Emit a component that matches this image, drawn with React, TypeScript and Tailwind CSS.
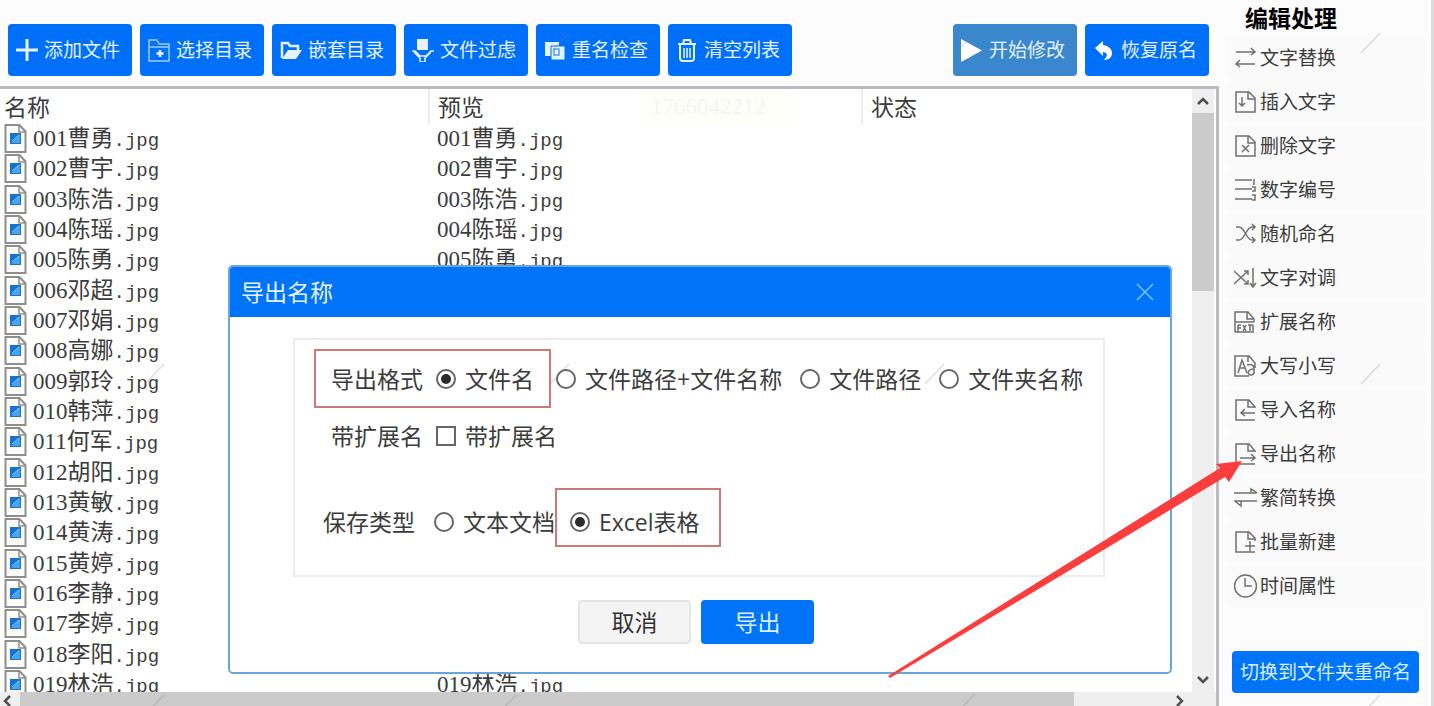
import type { ReactNode } from 'react';

const NAMES = [
  '曹勇', '曹宇', '陈浩', '陈瑶', '陈勇', '邓超', '邓娟', '高娜', '郭玲', '韩萍',
  '何军', '胡阳', '黄敏', '黄涛', '黄婷', '李静', '李婷', '李阳', '林浩',
];

const TOOLS: { label: string; icon: ReactNode }[] = [
  { label: '添加文件', icon: <path d="M11 0v22M0 11h22" strokeWidth="3" /> },
  {
    label: '选择目录',
    icon: (
      <>
        <path d="M1 22V1h8l2 4h10v17zM1 8h20" strokeWidth="1.500" opacity=".7" />
        <path d="M12 11v7M8.500 14.500h7" strokeWidth="2.500" />
      </>
    ),
  },
  {
    label: '嵌套目录',
    icon: (
      <>
        <path d="M2 19V4h6l2 3h8v4" strokeWidth="2.500" />
        <path d="M2 20l6-9h14l-6 9z" fill="currentColor" stroke="none" />
      </>
    ),
  },
  {
    label: '文件过虑',
    icon: (
      <>
        <path d="M5 0h11v11H5z" fill="currentColor" stroke="none" />
        <path d="M0 12h3l5 5h6l5-5h3M2 13l6 6v4h5v-4l6-6" strokeWidth="1.500" />
      </>
    ),
  },
  {
    label: '重名检查',
    icon: (
      <>
        <path d="M1 3h14v14H1z" fill="currentColor" stroke="none" />
        <path d="M7 7h14v14H7z" fill="currentColor" stroke="#0070fa" strokeWidth="1" />
        <path d="M12 10h-2v6h5v-6z" strokeWidth="1.500" className="stroke-[#4d9dfc]" />
      </>
    ),
  },
  {
    label: '清空列表',
    icon: (
      <>
        <path d="M2 5h18M7 5l1-4h6l1 4M4 6v13q0 3 3 3h8q3 0 3-3V6" strokeWidth="2" />
        <path d="M8 9v10M11 9v10M14 9v10" strokeWidth="1.500" />
      </>
    ),
  },
];

const docOutline = 'M21 11V8l-6-6H2v20h12M14 2v7h7';

const ACTIONS: { label: string; icon: ReactNode }[] = [
  { label: '文字替换', icon: <path d="M2 6h19M17 2l4 4-4 3M21 18H2M6 14l-4 4 4 3" /> },
  {
    label: '插入文字',
    icon: <path d="M2 2h13l6 6v14H2zM14 2v7h7M8 7v9M5 13l3 3 3-3" />,
  },
  {
    label: '删除文字',
    icon: <path d="M2 2h13l6 6v14H2zM14 2v7h7M8 11l7 7M15 11l-7 7" />,
  },
  { label: '数字编号', icon: <path d="M1 2h17M1 11h17M1 21h17M20 1v6M18 9h3v4h-3M18 17h3v5h-3" /> },
  {
    label: '随机命名',
    icon: <path d="M2 5h3c6 0 7 13 13 13h3M2 18h3c6 0 7-13 13-13h3M18 2l3 3-3 3M18 15l3 3-3 3" />,
  },
  {
    label: '文字对调',
    icon: <path d="M0 5l14 13M0 18L14 5M10 5h4v4M10 18h4v-4M19 2v18M16 17l3 4 3-4" />,
  },
  {
    label: '扩展名称',
    icon: <path d="M1 22V2h13l6 7v3M13 2v7h7M1 12h19M1 22h19M4 15v7M4 15h3M4 18h3M9 15l3 6M12 15l-3 6M14 15h5M16 15v6M19 15v6" />,
  },
  {
    label: '大写小写',
    icon: <path d="M21 14V9l-6-7H1v20h14M4 19L8 6l5 13M5 14h6M14 2v6M13 11c8-2 7 3 7 9M20 15c-7 0-7 6-3 6 2 0 3-1 3-3" />,
  },
  {
    label: '导入名称',
    icon: <path d="M21 10V9l-6-7H2v20h19M14 2v7h7M21 15H7M11 11l-4 4 4 3" />,
  },
  {
    label: '导出名称',
    icon: <path d="M21 10V9l-6-7H2v20h19M14 2v7h7M6 16h15M17 12l4 4-4 3" />,
  },
  { label: '繁简转换', icon: <path d="M0 7h23l-6-4v4M23 15H1l6 5v-5" /> },
  {
    label: '批量新建',
    icon: <path d={docOutline + 'M16 11v10M11 16h10M14 22h7'} />,
  },
  {
    label: '时间属性',
    icon: (
      <>
        <circle cx="11.500" cy="12" r="11" />
        <path d="M11 4v8h7" />
      </>
    ),
  },
];

function ToolIcon({ children }: { children: ReactNode }) {
  return (
    <svg viewBox="0 0 22 23" className="h-[23px] w-[22px] shrink-0" fill="none" stroke="currentColor">
      {children}
    </svg>
  );
}

function ToolButton({ label, icon, active }: { label: string; icon: ReactNode; active?: boolean }) {
  return (
    <button
      type="button"
      className={`flex h-[52px] w-[124px] shrink-0 items-center gap-[6px] rounded-[4px] pl-2 text-[19px] leading-6 whitespace-nowrap text-[#e6f3ff] ${
        active ? 'bg-[#3a87cd]' : 'bg-[#0070fa]'
      }`}
    >
      {icon}
      {label}
    </button>
  );
}

function FileIcon() {
  return (
    <svg viewBox="0 0 23 30" className="h-[30px] w-[23px] shrink-0" fill="none">
      <path d="M1.500 1h14l6 6.500v20.500h-20z" fill="#fcfcfc" stroke="#8e8e8a" strokeWidth="2" />
      <path d="M15 1v7h6" stroke="#8e8e8a" strokeWidth="1.500" />
      <rect x="6" y="9" width="11" height="11" fill="#1672cf" />
      <path d="M7 19l9-9v9z" fill="#4ba3ee" />
      <path d="M8 17l7-6" stroke="#8fd0ff" />
    </svg>
  );
}

function FileName({ index, name }: { index: number; name: string }) {
  return (
    <span className="block pt-[2px] font-['Liberation_Serif','Noto_Sans_CJK_SC',serif] whitespace-nowrap">
      {String(index + 1).padStart(3, '0')}
      {name}
      <span className="font-['Liberation_Mono',monospace] text-[19px]">.jpg</span>
    </span>
  );
}

function Chevron({ d }: { d: string }) {
  return (
    <svg viewBox="0 0 12 12" className="size-3 shrink-0" fill="none" stroke="#505050" strokeWidth="2.500">
      <path d={d} />
    </svg>
  );
}

function Radio({ name, label, checked }: { name: string; label: string; checked?: boolean }) {
  return (
    <label className="flex items-center gap-[9px] whitespace-nowrap">
      <input
        type="radio"
        name={name}
        defaultChecked={checked}
        className="size-5 shrink-0 appearance-none rounded-full border-2 border-[#666] bg-white bg-clip-content p-[3px] checked:bg-[#2c2c2c]"
      />
      {label}
    </label>
  );
}

function ExportDialog() {
  return (
    <div
      role="dialog"
      aria-label="导出名称"
      className="absolute top-[265px] left-[228px] w-[944px] overflow-hidden rounded-[5px] border-2 border-[#69a5d6] bg-white pb-7"
    >
      <header className="flex h-[50px] items-center justify-between bg-[#0074f8] pr-4 pl-[11px] text-[23px] leading-7 text-[#e6f3ff]">
        <h2>导出名称</h2>
        <button type="button" aria-label="关闭">
          <svg viewBox="0 0 18 18" className="size-[18px]" fill="none" stroke="#7cc3f5" strokeWidth="1.500">
            <path d="M1 1l16 16M17 1L1 17" />
          </svg>
        </button>
      </header>

      <div className="mr-[65px] ml-[63px] mt-[21px] h-[239px] border-2 border-[#ececec] pt-[9px] pl-[19px] text-[23px] leading-7 text-[#3c3c3c]">
        <div className="flex items-center">
          <div className="flex h-[59px] items-center gap-[13px] border-2 border-[#d07777] px-[15px]">
            <span className="whitespace-nowrap">导出格式</span>
            <Radio name="format" label="文件名" checked />
          </div>
          <div className="ml-[5px] flex gap-[18px]">
            <Radio name="format" label="文件路径+文件名称" />
            <Radio name="format" label="文件路径" />
            <Radio name="format" label="文件夹名称" />
          </div>
        </div>
        <div className="mt-[14px] flex items-center gap-[13px] pl-[17px]">
          <span>带扩展名</span>
          <label className="flex items-center gap-[9px]">
            <input
              type="checkbox"
              className="size-5 appearance-none border-2 border-[#666] bg-white bg-clip-content p-[3px] checked:bg-[#2c2c2c]"
            />
            带扩展名
          </label>
        </div>
        <div className="mt-[38px] flex pl-[9px]">
          <div className="flex h-[59px] items-center gap-[19px] pt-2">
            <span>保存类型</span>
            <Radio name="type" label="文本文档" />
          </div>
          <div className="flex h-[59px] items-center border-2 border-[#d07777] pt-2 pr-[19px] pl-[13px]">
            <Radio name="type" label="Excel表格" checked />
          </div>
        </div>
      </div>

      <div className="mt-[23px] flex justify-center gap-[10px] pr-2 text-[23px] leading-7">
        <button type="button" className="h-11 w-[113px] rounded-[4px] border-2 border-[#e4e4e4] bg-[#f4f4f4] text-[#333]">
          取消
        </button>
        <button type="button" className="h-11 w-[113px] rounded-[4px] bg-[#0074f8] text-[#d9efff]">
          导出
        </button>
      </div>
    </div>
  );
}

export default function App() {
  return (
    <div className="relative flex h-screen min-h-[700px] overflow-hidden bg-[#fcfcfc] font-['Open_Sans','Noto_Sans_CJK_SC',sans-serif] text-[#3c3c3c]">
      <main className="flex min-w-0 flex-1 flex-col">
        {/* toolbar */}
        <div className="flex gap-2 pt-6 pr-[10px] pb-[10px] pl-2">
          {TOOLS.map((tool) => (
            <ToolButton key={tool.label} label={tool.label} icon={<ToolIcon>{tool.icon}</ToolIcon>} />
          ))}
          <div className="ml-auto flex gap-2">
            <ToolButton
              active
              label="开始修改"
              icon={<ToolIcon><path d="M0 0l21 11.500L0 23z" fill="#fff" stroke="none" /></ToolIcon>}
            />
            <ToolButton
              label="恢复原名"
              icon={
                <ToolIcon>
                  <path d="M2 9l8-7v4c6 1 9 4 9 8 0 5-4 7-8 7 3-3 5-7-1-8v4z" fill="#fff" stroke="none" />
                </ToolIcon>
              }
            />
          </div>
        </div>

        {/* file list */}
        <div className="flex min-h-0 flex-1 flex-col border-t-[3px] border-r-[3px] border-[#b9bbc0] bg-white">
          <div className="flex min-h-0 flex-1">
            <div className="min-w-0 flex-1 overflow-hidden">
              <table className="w-full table-fixed border-collapse text-left text-[23px] leading-[30px]">
                <thead>
                  <tr className="h-[35px]">
                    <th className="w-[429px] border-r-2 border-[#ececec] p-0 pl-1 font-normal">名称</th>
                    <th className="w-[433px] border-r-2 border-[#ececec] p-0 pl-2 font-normal">
                      <div className="flex items-center justify-between pr-[66px]">
                        预览
                        <span className="h-[35px] w-[156px] bg-[#fffffa] pt-[3px] pl-3 font-['Liberation_Serif',serif] text-[#f5f5f0]">
                          1766042212
                        </span>
                      </div>
                    </th>
                    <th className="p-0 pl-2 font-normal">状态</th>
                  </tr>
                </thead>
                <tbody>
                  {NAMES.map((name, i) => (
                    <tr key={name} className="h-[30px] nth-[3n]:h-[31px]">
                      <td className="p-0 pl-1">
                        <div className="flex h-[30px] items-center gap-[6px]">
                          <FileIcon />
                          <FileName index={i} name={name} />
                        </div>
                      </td>
                      <td className="p-0 pl-2">
                        <div className="flex h-[30px] items-center">
                          <FileName index={i} name={name} />
                        </div>
                      </td>
                      <td />
                    </tr>
                  ))}
                </tbody>
              </table>
            </div>
            <div className="mr-0.5 flex w-[22px] shrink-0 flex-col items-center bg-[#efefef] py-[6px]">
              <Chevron d="M1 9l5-5 5 5" />
              <div className="mt-[6px] h-[178px] w-full bg-[#cbcbcb]" />
              <div className="mt-auto">
                <Chevron d="M1 3l5 5 5-5" />
              </div>
            </div>
          </div>
          <div className="flex h-[14px] shrink-0 items-end gap-2 bg-[#efefef] pr-[30px]">
            <Chevron d="M10 2L5 7l5 5" />
            <div className="mr-[92px] h-full flex-1 bg-[#cbcbcb]" />
            <Chevron d="M3 2l5 5-5 5" />
          </div>
        </div>
      </main>

      {/* side menu */}
      <aside className="flex w-[215px] shrink-0 flex-col border-r-[3px] border-[#dcdcdc] pr-[5px] pl-[6px]">
        <h1 className="h-[37px] pl-5 text-[23px] leading-[36px] font-bold text-black">编辑处理</h1>
        <nav className="flex flex-col gap-[2px]">
          {ACTIONS.map((action) => (
            <button
              key={action.label}
              type="button"
              className="flex h-[42px] items-center gap-[3px] rounded-[4px] bg-[#fafafa] pl-[9px] text-[19px] leading-6"
            >
              <svg viewBox="0 0 23 24" className="h-6 w-[23px] shrink-0" fill="none" stroke="#707070" strokeWidth="1.500">
                {action.icon}
              </svg>
              {action.label}
            </button>
          ))}
        </nav>
        <button type="button" className="mx-[7px] mt-auto mb-[13px] h-[42px] rounded-[4px] bg-[#0074f8] text-[19px] whitespace-nowrap text-[#d9efff]">
          切换到文件夹重命名
        </button>
      </aside>

      <ExportDialog />

      {/* watermark strokes */}
      <svg
        viewBox="0 0 1434 706"
        className="pointer-events-none absolute top-0 left-0 h-[706px] w-[1434px]"
        stroke="#808080"
        strokeOpacity=".25"
        strokeWidth="1.500"
      >
        <path d="M145 53l19-20M550 53l19-20M955 53l19-20M1361 53l19-20" />
        <path d="M145 384l19-20M550 384l19-20M925 384l19-20M1361 384l19-20" />
        <path d="M145 715l19-20M497 715l19-20M955 715l19-20M1361 715l19-20" />
      </svg>

      {/* pointer to the export entry */}
      <svg viewBox="0 0 356 222" className="pointer-events-none absolute top-[458px] left-[888px] h-[222px] w-[356px]">
        <path d="M0 218L332 10l-4-4 26-3-13 21-4-5L2 220z" fill="#fb3d3d" />
      </svg>
    </div>
  );
}
